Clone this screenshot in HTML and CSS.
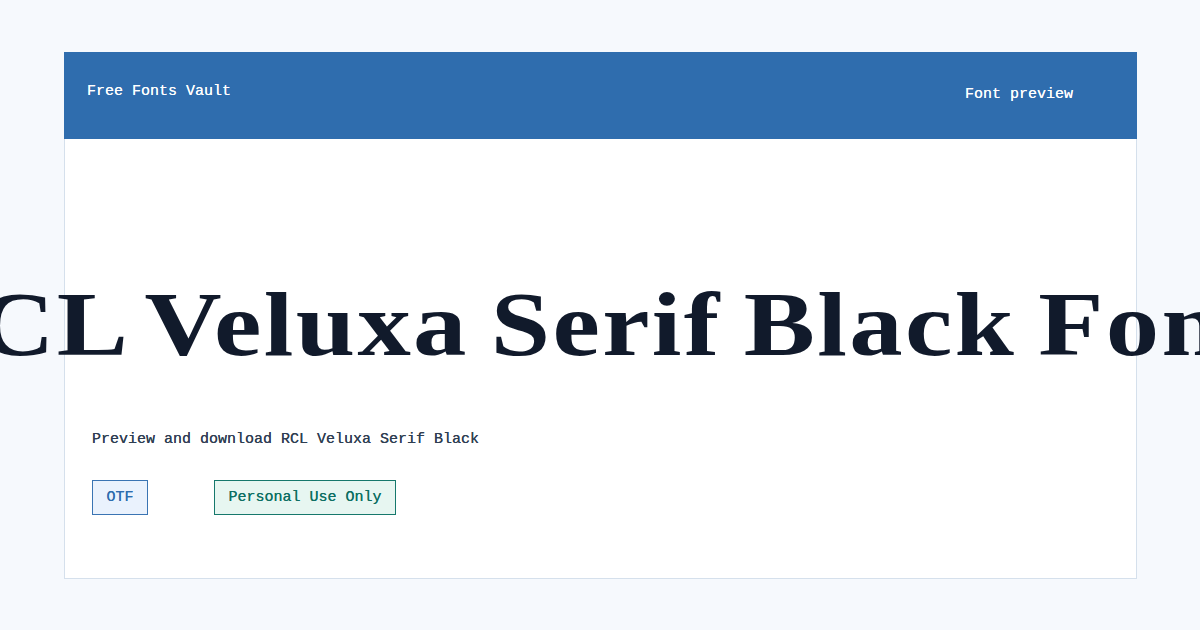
FILE: index.html
```html
<!DOCTYPE html>
<html lang="en">
<head>
<meta charset="utf-8">
<title>RCL Veluxa Serif Black Font</title>
<link rel="stylesheet" href="styles.css">
</head>
<body>
  <main class="card">
    <header class="card-header">
      <span class="brand">Free Fonts Vault</span>
      <span class="nav">Font preview</span>
    </header>
    <section class="card-body">
      <div class="specimen">
        <h1 class="specimen-text">RCL Veluxa Serif Black Font</h1>
      </div>
      <p class="summary">Preview and download RCL Veluxa Serif Black</p>
      <div class="tags">
        <span class="tag tag-format">OTF</span>
        <span class="tag tag-license">Personal Use Only</span>
      </div>
    </section>
  </main>
</body>
</html>
```

FILE: styles.css
```css
html, body {
  margin: 0;
  padding: 0;
}

body {
  width: 1200px;
  height: 630px;
  overflow: hidden;
  background: #f6f9fd;
  font-family: "Liberation Mono", "DejaVu Sans Mono", monospace;
  font-size: 15px;
}

.card {
  box-sizing: border-box;
  width: 1073px;
  height: 527px;
  margin: 52px 0 0 64px;
  background: #ffffff;
  border: 1px solid #d5e0ec;
  border-top: none;
  display: flex;
  flex-direction: column;
}

.card-header {
  height: 87px;
  margin: 0 -1px;
  background: #2f6dae;
  color: #ffffff;
  display: flex;
  justify-content: space-between;
  align-items: center;
  padding: 0 64px 0 23px;
  text-shadow: 0 0 0.4px currentColor;
}

.brand {
  margin-top: -8px;
}

.nav {
  margin-top: -3px;
}

.card-body {
  flex: 1;
  display: flex;
  flex-direction: column;
  padding: 0 26px 0 27px;
}

/* Specimen line runs past both edges of the card, centred on it */
.specimen {
  height: 231px;
  margin: 0 -27px;
  display: flex;
  justify-content: center;
  align-items: flex-end;
}

.specimen-text {
  margin: 0;
  white-space: nowrap;
  font-family: "Liberation Serif", "DejaVu Serif", serif;
  font-weight: 700;
  font-size: 92px;
  line-height: 1;
  letter-spacing: 2px;
  word-spacing: -6px;
  color: #111a2b;
  transform: translateX(-22px) scaleX(1.16);
}

.summary {
  margin: 60px 0 0;
  color: #2f3e52;
  line-height: 20px;
  text-shadow: 0 0 0.4px currentColor;
}

.tags {
  display: flex;
  gap: 66px;
  margin-top: 30px;
}

.tag {
  display: block;
  height: 33px;
  line-height: 33px;
  padding: 0 13.5px;
  border: 1px solid;
  text-shadow: 0 0 0.4px currentColor;
}

.tag-format {
  background: #eaf2fd;
  border-color: #3a74b3;
  color: #2f6dae;
}

.tag-license {
  background: #e7f6f1;
  border-color: #16786c;
  color: #0f6f63;
}
```
